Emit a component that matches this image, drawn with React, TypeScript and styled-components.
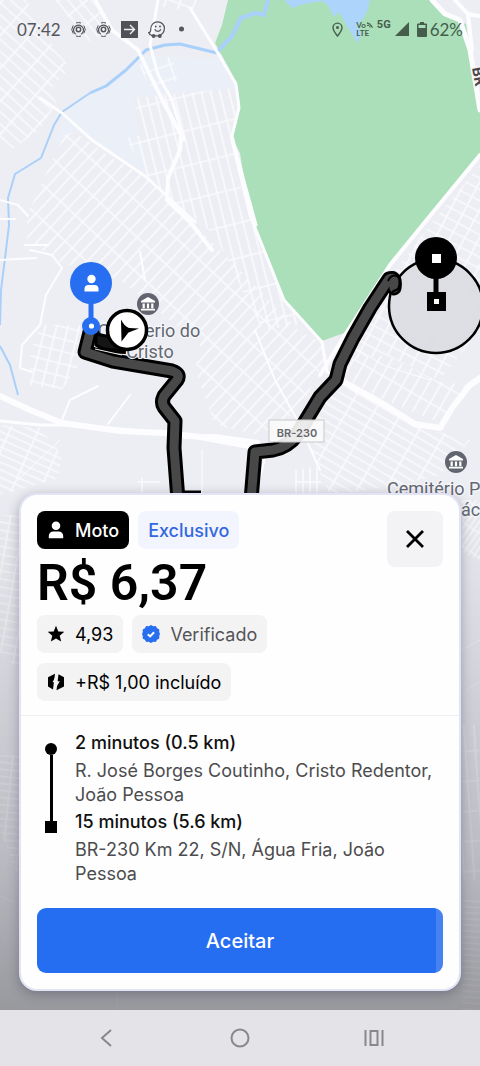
import React from "react";
import styled, { createGlobalStyle } from "styled-components";

const sans = `Inter, "Noto Sans", sans-serif`;

const GlobalStyle = createGlobalStyle`
  *, *::before, *::after { box-sizing: border-box; }
  body { margin: 0; background: #eeeff4; font-family: ${sans}; }
  button { font: inherit; border: 0; padding: 0; cursor: pointer; }
  h1, p, ol { margin: 0; padding: 0; }
`;

const Screen = styled.div`
  display: flex;
  flex-direction: column;
  min-height: 100vh;
`;

const Stage = styled.main`
  position: relative;
  isolation: isolate;
  flex: 1;
  display: flex;
  flex-direction: column;
  overflow: hidden;
`;

const MapCanvas = styled.svg`
  position: absolute;
  inset: 0;
  z-index: -1;
  width: 100%;
  height: 100%;
`;

const StatusBar = styled.header`
  display: flex;
  align-items: center;
  justify-content: space-between;
  height: 58px;
  padding: 0 17px;
  font-family: Lato, sans-serif;
  font-size: 17px;
`;

const StatusGroup = styled.div<{ $gap: number; $color: string }>`
  display: flex;
  align-items: center;
  gap: ${(p) => p.$gap}px;
  color: ${(p) => p.$color};
`;

const NetworkTag = styled.span`
  display: flex;
  flex-direction: column;
  font: 700 8px/8px Lato, sans-serif;
`;

const NetworkGen = styled.span`
  align-self: flex-start;
  font: 700 11px/12px Roboto, sans-serif;
`;

const Battery = styled.span`
  display: flex;
  align-items: center;
  gap: 3px;
`;

const Card = styled.section`
  margin: auto 19px 19px;
  background: #fefefe;
  border: 2px solid #e3e3f6;
  border-radius: 18px;
  box-shadow: 0 3px 12px rgba(40, 40, 70, 0.35);
`;

const Offer = styled.div`
  display: flex;
  justify-content: space-between;
  padding: 16px 16px 14px;
  border-bottom: 1px solid #f0f0f2;
`;

const OfferDetails = styled.div`
  display: flex;
  flex-direction: column;
`;

const ChipRow = styled.div`
  display: flex;
  flex-wrap: wrap;
  gap: 10px 9px;
  margin-bottom: 10px;
  &:last-child { margin-bottom: 0; }
`;

type Tone = "dark" | "accent" | "plain" | "muted";
const tones: Record<Tone, { bg: string; fg: string; weight: number }> = {
  dark: { bg: "#000000", fg: "#ffffff", weight: 500 },
  accent: { bg: "#f2f4fe", fg: "#3468e0", weight: 500 },
  plain: { bg: "#f3f3f4", fg: "#000000", weight: 400 },
  muted: { bg: "#f3f3f4", fg: "#545457", weight: 400 },
};

const Chip = styled.span<{ $tone: Tone }>`
  display: inline-flex;
  align-items: center;
  gap: 10px;
  height: 38px;
  padding: 0 10px;
  border-radius: 8px;
  background: ${(p) => tones[p.$tone].bg};
  color: ${(p) => tones[p.$tone].fg};
  font-size: 18px;
  font-weight: ${(p) => tones[p.$tone].weight};
`;

const Price = styled.h1`
  margin-bottom: 8px;
  font: 600 50px/48px Roboto, sans-serif;
  color: #000;
`;

const CloseButton = styled.button`
  display: grid;
  place-items: center;
  width: 56px;
  height: 56px;
  border-radius: 8px;
  background: #f3f3f5;
`;

const Trip = styled.div`
  display: grid;
  grid-template-columns: 38px 1fr;
  padding: 15px 16px 22px;
`;

const Rail = styled.div`
  display: flex;
  flex-direction: column;
  align-items: center;
  width: 12px;
  margin-left: 8px;
  padding: 12px 0 53px;
`;

const RailMark = styled.span<{ $round?: boolean }>`
  width: 12px;
  height: 12px;
  background: #000;
  border-radius: ${(p) => (p.$round ? "50%" : "0")};
`;

const RailLine = styled.span`
  flex: 1;
  width: 3px;
  background: #000;
`;

const Stops = styled.ol`
  display: flex;
  flex-direction: column;
  gap: 3px;
  list-style: none;
`;

const Leg = styled.p`
  margin-bottom: 4px;
  font-size: 18px;
  line-height: 24px;
  font-weight: 500;
  color: #111;
`;

const Address = styled.p`
  font-size: 18px;
  line-height: 24px;
  color: #4c4c4e;
`;

const AcceptButton = styled.button`
  display: block;
  width: calc(100% - 32px);
  height: 65px;
  margin: 0 16px 16px;
  border-radius: 9px;
  background: linear-gradient(to left, #4782f3 7px, #256df1 7px);
  color: #fff;
  && { font-size: 20px; font-weight: 500; }
`;

const NavBar = styled.nav`
  display: flex;
  height: 56px;
  padding: 0 39px;
  background: #e4e3e8;
`;

const NavButton = styled.button`
  flex: 1;
  display: grid;
  place-items: center;
  background: none;
  color: #88878c;
`;

/* ---------- icons ---------- */

const TargetIcon = () => (
  <svg width="15" height="15" viewBox="0 0 15 15" fill="none" stroke="currentColor">
    <circle cx="7.5" cy="7.5" r="2.2" strokeWidth="1.5" />
    <path d="M4.900 12.300a5 5 0 1 1 5.200 0" strokeWidth="1.2" />
    <path d="M2.200 3.500A6.700 6.700 0 0 0 2.200 11.500M12.800 3.500A6.700 6.700 0 0 1 12.800 11.500M5 14a6.600 6.600 0 0 0 5 0M5 1a6.600 6.600 0 0 1 5 0" strokeWidth="1" />
  </svg>
);

const PersonIcon = () => (
  <svg width="18" height="18" viewBox="0 0 18 18" fill="currentColor">
    <circle cx="9" cy="4.8" r="4.3" />
    <path d="M1.8 17.3v-2.4a4.4 4.4 0 0 1 4.4-4.4h5.6a4.4 4.4 0 0 1 4.4 4.4v2.4z" />
  </svg>
);

/* ---------- map ---------- */

interface District {
  id: string;
  area: string;
  angle: number;
  w: number;
  h: number;
}

const districts: District[] = [
  { id: "nw", area: "0,0 26,0 45,35 70,68 52,88 56,103 40,130 8,152 0,145", angle: 42, w: 22, h: 9 },
  { id: "n", area: "55,0 92,0 110,30 88,42", angle: 50, w: 18, h: 9 },
  { id: "ne", area: "160,0 198,0 192,12 158,6", angle: 20, w: 14, h: 12 },
  { id: "mid", area: "138,65 172,56 178,80 150,86", angle: -18, w: 14, h: 14 },
  { id: "cols", area: "133,98 235,88 238,130 230,138 248,190 262,250 300,325 262,330 215,235 165,195 144,172 126,138 144,134", angle: -14, w: 9, h: 34 },
  { id: "core", area: "64,135 75,132 112,158 145,175 190,220 232,262 298,330 330,348 300,410 260,435 215,425 195,370 200,345 120,280 60,262 27,240 27,216 42,182", angle: 43, w: 10, h: 26 },
  { id: "west", area: "42,325 80,325 82,360 62,390 30,385 30,350", angle: 14, w: 11, h: 12 },
  { id: "sw", area: "0,425 40,428 62,455 58,478 20,490 0,494", angle: 24, w: 26, h: 7 },
  { id: "sw2", area: "138,478 160,478 160,500 138,500", angle: 0, w: 20, h: 20 },
  { id: "east", area: "480,165 480,330 440,380 385,355 345,360 372,315 392,275 430,225", angle: 28, w: 13, h: 10 },
  { id: "se", area: "345,360 385,355 440,382 470,385 445,425 385,400 345,378", angle: 30, w: 11, h: 22 },
  { id: "se2", area: "330,395 350,388 430,430 470,440 440,475 400,485 330,495 305,440", angle: 30, w: 24, h: 8 },
  { id: "s", area: "295,470 320,466 322,495 295,495", angle: 0, w: 7, h: 40 },
  { id: "se3", area: "462,500 480,500 480,560 462,552", angle: 35, w: 5, h: 20 },
  { id: "left", area: "0,515 19,515 19,670 0,652", angle: 10, w: 14, h: 8 },
  { id: "left2", area: "0,755 19,755 19,880 0,830", angle: 6, w: 15, h: 7 },
  { id: "right", area: "462,725 480,725 480,880 462,880", angle: -4, w: 10, h: 30 },
  { id: "right2", area: "462,900 480,900 480,1010 462,1010", angle: 4, w: 40, h: 6 },
];

const roads: { d: string; w: number }[] = [
  { d: "M95 0L112 30 138 50 150 75 165 105 181 135 180 150 168 178 167 200 190 222 212 250", w: 4 },
  { d: "M158 0L150 45 158 75 172 100 184 140", w: 3 },
  { d: "M190 8L216 50 236 84 239 108 232 136 245 185 256 225", w: 3 },
  { d: "M40 98L62 113 92 140 145 176 195 222", w: 3 },
  { d: "M0 396L30 410 62 423 120 431 165 433 200 437 255 447", w: 6 },
  { d: "M0 421L40 425 80 425 150 432", w: 3 },
  { d: "M185 437L215 436 258 442", w: 4 },
  { d: "M340 380L380 402 415 424 440 428 452 408 470 385 480 378", w: 6 },
  { d: "M432 0L445 14 460 20 470 50 480 110", w: 5 },
  { d: "M455 0L468 14 480 16M468 14L472 50", w: 4 },
  { d: "M480 155L425 222 390 265 345 335 320 375", w: 4 },
  { d: "M231 136L250 215 284 300 322 342", w: 3 },
  { d: "M322 342L327 372 345 380", w: 3 },
  { d: "M255 330L275 380 300 425 320 470", w: 2 },
  { d: "M30 250L52 255 62 268 46 295 40 325 22 345 20 368 32 372", w: 2 },
  { d: "M0 200L18 205 28 216M0 219H15M25 245H48M145 280L140 252", w: 2 },
  { d: "M98 386L70 400 62 420M130 395L108 424M268 445L255 500M0 260L36 258", w: 2 },
  { d: "M202 450V500M60 440L18 480M350 345L385 366 430 380", w: 1 },
];

const faintRoads = "M117 990V1010M0 896L14 902M462 650L480 640M466 690L480 682";

const route1 = "M91 328L85 352 113 361 172 371Q181 374 177 380L164 396Q161 402 164 407L175 421 174 448 178 500";
const route2 = "M251 500L255 452 273 450Q288 447 297 435L320 397 336 380 340 364 353 338 370 308 389 279Q396 276 394 288";

const Landmark = ({ x, y }: { x: number; y: number }) => (
  <g transform={`translate(${x} ${y})`}>
    <circle r="11" fill="#62656f" />
    <path d="M0-7L7-3V-1.6H-7V-3zM-5.4-.4h2.2v4.6h-2.2zM-1.1-.4h2.2v4.6h-2.2zM3.2-.4h2.2v4.6H3.2zM-7 4.8H7V6.6H-7z" fill="#fff" />
  </g>
);

const CityMap = () => (
  <MapCanvas viewBox="0 0 480 1010" preserveAspectRatio="xMidYMin slice" role="img" aria-label="Mapa da rota">
    <defs>
      {districts.map((d) => (
        <pattern key={d.id} id={`grid-${d.id}`} width={d.w} height={d.h} patternUnits="userSpaceOnUse" patternTransform={`rotate(${d.angle})`}>
          <path d={`M0 2H${d.w}M2 0V${d.h}`} stroke="#fcfcff" strokeWidth="1.700" />
        </pattern>
      ))}
      <linearGradient id="dim" x1="0" y1="0" x2="0" y2="1">
        <stop offset="0" stopColor="#3c3c46" stopOpacity="0" />
        <stop offset="0.3" stopColor="#3c3c46" stopOpacity="0.12" />
        <stop offset="0.7" stopColor="#3c3c46" stopOpacity="0.28" />
        <stop offset="1" stopColor="#3c3c40" stopOpacity="0.48" />
      </linearGradient>
    </defs>
    <rect width="480" height="1010" fill="#edeef3" />
    <path d="M70 108L145 55 230 60 236 88 133 98 140 140 150 175 75 130 50 150z" fill="#ebeff7" />
    {districts.map((d) => (
      <polygon key={d.id} points={d.area} fill={`url(#grid-${d.id})`} opacity="0.85" />
    ))}
    <path d="M228 0L222 25 215 43 226 63 237 84 240 105 231 136 240 153 245 185 253 208 254 224 266 252 285 300 322 341 347 332 375 290 402 250 480 155V105L472 65 466 24 450 18 432 0z" fill="#abdfb9" />
    <path d="M284 0L292 8 304 4 322 1 328 5 334 17 339 12 346 24 352 34 357 43 362 34 358 26 367 12 370 0z" fill="#add5fb" />
    <g fill="none" stroke="#a9d0fa" strokeLinejoin="round">
      <path d="M268 0L264 15 256 13 241 18 232 36 217 52" strokeWidth="4" />
      <path d="M217 53L180 44 165 45 146 50 126 70 106 86 90 93" strokeWidth="3" />
      <path d="M90 93L62 112 54 125 41 158 15 174 8 198 9 225 6 250 1 290 0 325M0 346L10 365 18 395" strokeWidth="2" />
    </g>
    <g fill="none" stroke="#fdfdff" strokeLinejoin="round" strokeLinecap="round">
      {roads.map((r) => (
        <path key={r.d} d={r.d} strokeWidth={r.w} />
      ))}
      <path d={faintRoads} strokeOpacity="0.6" />
    </g>
    <rect y="480" width="480" height="530" fill="url(#dim)" />

    <g fontFamily="Roboto, sans-serif" fontSize="18" fill="#646872" stroke="#f4f5f9" strokeWidth="3" paintOrder="stroke" strokeLinejoin="round">
      <text x="149" y="337" textAnchor="middle">Cemiterio do</text>
      <text x="387" y="495">Cemitério P</text>
      <text x="461" y="516">ác</text>
      <text transform="translate(472 68) rotate(80)" fontSize="15" fontWeight="700" fill="#4a4548">BR</text>
    </g>
    <Landmark x={148} y={304} />
    <Landmark x={456} y={462} />

    <circle cx="436" cy="306" r="47" fill="#d9dae0" fillOpacity="0.85" stroke="#000" strokeWidth="2.5" />
    <g fill="none" strokeLinejoin="round">
      <path d="M94 330L103 349 126 350" stroke="#000" strokeWidth="8" />
      <path d={route1} stroke="#000" strokeWidth="15" />
      <path d={route2} stroke="#000" strokeWidth="15" strokeLinecap="round" />
      <path d={route1} stroke="#484848" strokeWidth="9" />
      <path d={route2} stroke="#484848" strokeWidth="9" strokeLinecap="round" />
      <path d="M388 281Q391 274 397 276Q402 280 398 289L392 292" stroke="#000" strokeWidth="2" />
      <path d="M184 492H201" stroke="#000" strokeWidth="3" />
      <path d="M96 334V345Q104 351 120 350L126 340Z" fill="#151515" stroke="#000" strokeWidth="3" />
      <path d="M95 349L122 355" stroke="#eee" strokeWidth="1" />
    </g>
    <text x="150" y="358" textAnchor="middle" fontFamily="Roboto, sans-serif" fontSize="18" fill="#646872" stroke="#f4f5f9" strokeWidth="2" paintOrder="stroke">Cristo</text>

    <rect x="269" y="420" width="55" height="22" fill="#fafafa" fillOpacity="0.92" stroke="#c9c9cc" />
    <text x="297" y="437" textAnchor="middle" fontFamily="Inter, sans-serif" fontSize="11" fontWeight="600" fill="#66676c">BR-230</text>

    <path d="M436 270V300" stroke="#000" strokeWidth="5" />
    <circle cx="436" cy="258" r="21" />
    <rect x="432" y="254" width="9" height="9" fill="#fff" />
    <rect x="427" y="292" width="19" height="19" />
    <rect x="434" y="299" width="5" height="5" fill="#fff" />

    <path d="M91 300V320" stroke="#276ef1" strokeWidth="5" />
    <circle cx="91" cy="283" r="21" fill="#276ef1" />
    <circle cx="91" cy="326" r="9" fill="#276ef1" />
    <circle cx="91.500" cy="326" r="2.600" fill="#fff" />
    <circle cx="91.500" cy="279" r="4.200" fill="#fff" />
    <path d="M84.500 291.500v-2.500a4 4 0 0 1 4-4h6a4 4 0 0 1 4 4v2.500z" fill="#fff" />

    <circle cx="127" cy="330" r="19.500" fill="#fff" stroke="#000" strokeWidth="3.500" />
    <path d="M121 319.500Q124 326 129 328L139 328.500 128.500 332.500 121.500 341.500z" />
  </MapCanvas>
);

export default function App() {
  return (
    <Screen>
      <GlobalStyle />
      <Stage>
        <CityMap />
        <StatusBar>
          <StatusGroup $gap={10} $color="#55565b">
            <time>07:42</time>
            <TargetIcon />
            <TargetIcon />
            <svg width="17" height="17" viewBox="0 0 17 17">
              <path d="M0 0h17v17H0z" fill="#515257" />
              <path d="M3 8.500h10.500M9 4l4.500 4.500L9 13" fill="none" stroke="#f0f0f4" strokeWidth="1.400" />
            </svg>
            <svg width="17" height="17" viewBox="0 0 17 17" fill="none" stroke="currentColor" strokeWidth="1.200">
              <path d="M4 14.500C2 13.800 1 12.800 .7 11.500c1.500 0 2-.8 2-2.500C2.500 4 5.500 .8 9.700 .8c3.800 0 6.700 3 6.700 6.500 0 3-1.500 5.500-4.200 6.800M7 14.800h3.500" />
              <path d="M6.800 8.200c.8 2.800 5.300 2.800 6 0" />
              <g fill="currentColor" stroke="none">
                <circle cx="7.700" cy="5.500" r=".9" />
                <circle cx="12" cy="5.500" r=".9" />
                <circle cx="5.500" cy="15" r="2" />
                <circle cx="11.800" cy="15" r="2" />
              </g>
            </svg>
            <svg width="13" height="6" viewBox="0 0 13 6"><circle cx="6.500" cy="3" r="2.500" fill="currentColor" /></svg>
          </StatusGroup>
          <StatusGroup $gap={4} $color="#455e4c">
            <svg width="20" height="15" viewBox="0 0 20 15" fill="none" stroke="currentColor" strokeWidth="1.400">
              <path d="M5.500 14C2.500 10.500 1 8 1 5.600a4.500 4.500 0 0 1 9 0C10 8 8.500 10.500 5.500 14z" />
              <circle cx="5.500" cy="5.500" r="1.500" fill="currentColor" stroke="none" />
            </svg>
            <NetworkTag>
              <span>Vo<svg width="7" height="6" viewBox="0 0 7 6" fill="none" stroke="currentColor"><path d="M1 1.500C3 .5 6 2.500 6 5.500M1 3.500C3 3 4 4 4 5.500M1 .5L6.500 5.500" /></svg></span>
              <span>LTE</span>
            </NetworkTag>
            <NetworkGen>5G</NetworkGen>
            <svg width="18" height="14" viewBox="0 0 18 14"><path d="M14 0V14H0z" fill="currentColor" /></svg>
            <Battery>
              <svg width="10" height="15" viewBox="0 0 10 15">
                <path d="M3 0h4v1.500h2q1 0 1 1V14q0 1-1 1H1q-1 0-1-1V2.500q0-1 1-1h2zM1.500 3v3h7V3z" fill="currentColor" fillRule="evenodd" />
              </svg>
              62%
            </Battery>
          </StatusGroup>
        </StatusBar>

        <Card aria-label="Oferta de viagem">
          <Offer>
            <OfferDetails>
              <ChipRow>
                <Chip $tone="dark"><PersonIcon />Moto</Chip>
                <Chip $tone="accent">Exclusivo</Chip>
              </ChipRow>
              <Price>R$ 6,37</Price>
              <ChipRow>
                <Chip $tone="plain">
                  <svg width="18" height="18" viewBox="0 0 18 18" fill="currentColor">
                    <path d="M9 .8l2.300 5.600 6 .4-4.600 3.900 1.500 5.900L9 13.400l-5.200 3.200 1.500-5.900L.7 6.800l6-.4z" />
                  </svg>
                  4,93
                </Chip>
                <Chip $tone="muted">
                  <svg width="18" height="18" viewBox="0 0 18 18">
                    <path d="M9 0l2.300 1.200 2.500-.2 1.300 2.200 2.200 1.300-.1 2.500L18 9l-.8 2 .1 2.500-2.200 1.300-1.300 2.200-2.500-.2L9 18l-2.300-1.200-2.500.2-1.300-2.200-2.200-1.300.1-2.500L0 9l.8-2-.1-2.500 2.200-1.300L4.200 1l2.500.2z" fill="#276ef1" />
                    <path d="M5.800 9.200l2.300 2.200 4-4.200" fill="none" stroke="#fff" strokeWidth="2" />
                  </svg>
                  Verificado
                </Chip>
              </ChipRow>
              <ChipRow>
                <Chip $tone="plain">
                  <svg width="18" height="18" viewBox="0 0 18 18">
                    <path d="M8 .8L1 4.200V13.500L6 16.500zM11.500 1.200L17 4.200V13.500L9.500 17.200z" />
                    <path d="M10.500 0L5.500 9.300H8.500L7 18 12.800 8.300H9.800z" fill="#f3f3f4" />
                  </svg>
                  +R$ 1,00 incluído
                </Chip>
              </ChipRow>
            </OfferDetails>
            <CloseButton aria-label="Fechar">
              <svg width="18" height="18" viewBox="0 0 18 18" stroke="#000" strokeWidth="2.800"><path d="M1 1l16 16M17 1L1 17" /></svg>
            </CloseButton>
          </Offer>
          <Trip>
            <Rail aria-hidden="true">
              <RailMark $round />
              <RailLine />
              <RailMark />
            </Rail>
            <Stops>
              <li>
                <Leg>2 minutos (0.5 km)</Leg>
                <Address>R. José Borges Coutinho, Cristo Redentor, João Pessoa</Address>
              </li>
              <li>
                <Leg>15 minutos (5.6 km)</Leg>
                <Address>BR-230 Km 22, S/N, Água Fria, João Pessoa</Address>
              </li>
            </Stops>
          </Trip>
          <AcceptButton>Aceitar</AcceptButton>
        </Card>
      </Stage>
      <NavBar>
        <NavButton aria-label="Voltar">
          <svg width="12" height="18" viewBox="0 0 12 18" fill="none" stroke="currentColor" strokeWidth="2"><path d="M11 1L2 9l9 8" /></svg>
        </NavButton>
        <NavButton aria-label="Início">
          <svg width="20" height="20" viewBox="0 0 20 20" fill="none" stroke="currentColor" strokeWidth="2"><circle cx="10" cy="10" r="8.500" /></svg>
        </NavButton>
        <NavButton aria-label="Recentes">
          <svg width="20" height="16" viewBox="0 0 20 16" fill="none" stroke="currentColor" strokeWidth="2"><path d="M1.500 0V16M18.500 0V16M6.500 1h7v14h-7z" /></svg>
        </NavButton>
      </NavBar>
    </Screen>
  );
}
